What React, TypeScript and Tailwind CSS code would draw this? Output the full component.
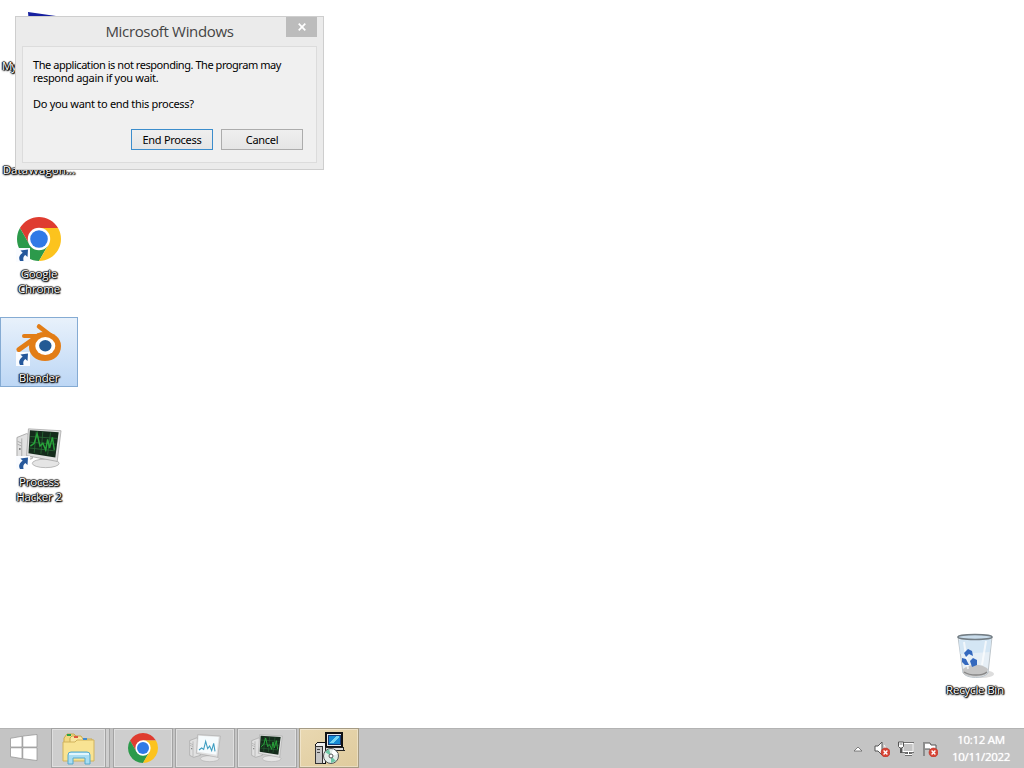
import type { ReactNode } from "react";
import clsx from "clsx";

const Chrome = ({ className }: { className?: string }) => (
  <svg viewBox="2 2 44 44" className={className}>
    <path d="M4.95 13A22 22 0 0 1 43.05 13H24L14.47 29.5Z" fill="#df3c30" />
    <path d="M4.95 13A22 22 0 0 0 24 46L33.53 29.5H14.47Z" fill="#2c9a4b" />
    <path d="M43.05 13A22 22 0 0 1 24 46L33.53 29.5L24 13Z" fill="#fcc31e" />
    <circle cx="24" cy="24" r="11.2" fill="#fff" />
    <circle cx="24" cy="24" r="8.8" fill="#3079e6" />
  </svg>
);

const Blender = ({ className }: { className?: string }) => (
  <svg viewBox="0 0 46 42" className={className}>
    <g stroke="#e27d16" strokeLinecap="round" strokeLinejoin="round" fill="none">
      <path d="M23 4.5L38 16" strokeWidth="4.5" />
      <path d="M8 14H29" strokeWidth="4" />
      <path d="M3 27.5L22 14" strokeWidth="5" />
    </g>
    <path d="M28 10C38 10 45 16 45 24C45 33 38 39 29 39C20 39 13 33 13 25C13 17 19 10 28 10Z" fill="#e27d16" />
    <ellipse cx="29.3" cy="24" rx="10" ry="9" fill="#fff" />
    <ellipse cx="29.3" cy="23.8" rx="6.2" ry="5.7" fill="#235a94" />
  </svg>
);

const Computer = ({ className, light }: { className?: string; light?: boolean }) => (
  <svg viewBox="0 0 48 44" className={className}>
    <path d="M1 11L11 7L17 9V33L7 36L1 33Z" fill="#e1e1e1" stroke="#999" strokeWidth=".8" />
    <path d="M6 12V35M1.5 15L6 17M1.5 18L6 20" stroke="#aaa" fill="none" />
    <circle cx="4" cy="23" r="1" fill="#777" />
    <path d="M25 31L34 33L33 38H25Z" fill="#bdbdbd" />
    <ellipse cx="31" cy="38" rx="14" ry="4.5" fill="#e5e5e5" stroke="#aaa" strokeWidth=".8" />
    <path d="M13 2L47 4L43 36L11 30Z" fill="#e1e1e1" stroke="#a5a5a5" strokeWidth=".8" />
    <path d="M14.5 3.5L44.5 5.5L41 32L13 27.5Z" fill={light ? "#f6fbfd" : "#142b1b"} />
    {light ? (
      <path d="M15 25L19 22L22 24L25 12L28 23L31 19L34 26L37 15L39 27" fill="none" stroke="#3b9cc0" strokeWidth="1.6" />
    ) : (
      <>
        <path d="M15 10L43 12M15 16L42 18M14 22L41 25M21 5L19 27M28 5L26 28M36 6L33 29" stroke="#2a6c37" strokeWidth=".8" />
        <path d="M15 20L19 17L22 7L25 20L28 17L31 24L33 13L35 22L38 11L40 24" fill="none" stroke="#28a53a" strokeWidth="1.5" />
      </>
    )}
  </svg>
);

const ShortcutArrow = () => (
  <svg viewBox="0 0 14 14" className="absolute bottom-1 left-0 size-3.5">
    <rect width="14" height="14" fill="#fafcff" />
    <path d="M4.5 2.5L12 1.5L11.5 9L9.3 7C7.3 8.5 7 10 7.5 13H4C2.2 9.5 3.5 7 6.7 4.7Z" fill="#24579b" />
  </svg>
);

const RecycleBin = () => (
  <svg viewBox="0 0 40 48" className="mt-[-2px] h-12 w-10">
    <ellipse cx="26" cy="42" rx="13" ry="4" fill="#ddd" />
    <path d="M3 5L8 41C12 47 29 47 33 41L37 5Z" fill="#e6eff6" stroke="#bdc5cb" />
    <path d="M4 8L36 7L35 20L5 22Z" fill="#cfe3f4" opacity=".8" />
    <path d="M8 37C16 31 27 32 33 37L32 41C28 46 12 46 8 41Z" fill="#c5c5c5" />
    <path d="M9 40C15 44 27 44 32 40" fill="none" stroke="#888" strokeWidth="1.5" />
    <path d="M9 10L13 37M31 9L27 33" stroke="#fff" strokeWidth="2" opacity=".7" />
    <ellipse cx="20" cy="5" rx="17" ry="2.5" fill="#c9dceb" stroke="#737d84" strokeWidth="1.6" />
    <g fill="#3469be">
      <path d="M9 21L13 17L17 19L18 24L14 22L11 25Z" />
      <path d="M7 26L11 27L14 33L10 33L7 30Z" />
      <path d="M15 29L18 26L22 28L22 33L17 35L16 32Z" />
    </g>
  </svg>
);

const Folder = () => (
  <svg viewBox="0 0 34 34" className="mt-0.5 h-[34px] w-[34px]">
    <path d="M2 6L5 2H12L14 4V25H2Z" fill="#f2d780" stroke="#c9aa50" />
    <path d="M8 6L10 4H19L21 7H30V12H8Z" fill="#f9e6a1" stroke="#c9aa50" />
    <path d="M1 10H13L15 8H32V29H1Z" fill="#f8e393" stroke="#d1b35c" />
    <path d="M5 3H9" stroke="#29a34a" strokeWidth="2" />
    <path d="M12 5H16" stroke="#db5741" strokeWidth="2" />
    <path d="M21 7H25" stroke="#418bd0" strokeWidth="2" />
    <path d="M6 32V23Q6 20 9 20H25Q28 20 28 23V32H23V26H11V32Z" fill="#a9ddf2" stroke="#55a9cd" />
    <path d="M7 22H27" stroke="#e1f6fd" strokeWidth="2" />
  </svg>
);

const Installer = () => (
  <svg viewBox="0 0 32 32" className="size-8" shapeRendering="crispEdges">
    <path d="M2 13L5 10H12V31H2Z" fill="#eee" stroke="#111" />
    <path d="M2 14H9V31H2Z" fill="#c5c5c5" stroke="#333" />
    <path d="M4 17H7M4 20H7" stroke="#444" />
    <path d="M13 1H29V15H13Z" fill="#e8e8e8" stroke="#111" strokeWidth="1.3" />
    <path d="M15 3H27V12H15Z" fill="#168bd4" stroke="#173c78" />
    <path d="M16 11L24 4H26V6L20 11Z" fill="#76d6f2" />
    <path d="M12 15H30L31 18H13Z" fill="#ddd" stroke="#222" />
    <g shapeRendering="auto">
      <circle cx="18" cy="24" r="7.5" fill="#e5eeea" stroke="#555" />
      <path d="M18 24L12 20L16 17ZM18 24L23 29L18 31Z" fill="#6ec6a5" />
      <path d="M18 24L20 17L25 22Z" fill="#fff" />
      <circle cx="18" cy="24" r="2" fill="#fff" stroke="#555" />
    </g>
  </svg>
);

const ErrorBadge = () => (
  <g>
    <circle cx="11.5" cy="11.5" r="4.5" fill="#d84435" stroke="#b93226" strokeWidth=".6" />
    <path d="M9.6 9.6L13.4 13.4M13.4 9.6L9.6 13.4" stroke="#fff" strokeWidth="1.4" />
  </g>
);

const labelStyle =
  "whitespace-nowrap text-center font-['Open_Sans',sans-serif] text-[11.5px] leading-[15px] tracking-[-0.2px] text-white [text-shadow:0_0_1px_#000,1px_1px_1px_#000,-1px_0_1px_#000,1px_0_1px_#000,0_1px_2px_#000,0_-1px_1px_#555]";

interface DesktopIconProps {
  className: string;
  label: ReactNode;
  labelClassName?: string;
  children?: ReactNode;
  shortcut?: boolean;
  selected?: boolean;
}

const DesktopIcon = ({ className, label, labelClassName, children, shortcut, selected }: DesktopIconProps) => (
  <div
    className={clsx(
      "absolute flex h-[70px] w-[78px] flex-col items-center border pt-1",
      selected ? "border-[#85abd3] bg-linear-to-b from-[#e8f1fb] to-[#bdd7f5]" : "border-transparent",
      className
    )}
  >
    <div className="relative flex h-12 w-[46px] shrink-0 items-start justify-center">
      {children}
      {shortcut && <ShortcutArrow />}
    </div>
    <div className={clsx(labelStyle, labelClassName)}>{label}</div>
  </div>
);

const TaskButton = ({ children, active, narrow }: { children: ReactNode; active?: boolean; narrow?: boolean }) => (
  <div
    className={clsx(
      "flex h-10 items-center justify-center border shadow-[inset_0_0_0_1px_rgba(255,255,255,0.35)]",
      narrow ? "w-[55px]" : "w-[60px]",
      active ? "border-[#a59b84] bg-linear-to-br from-[#e9d8b1] to-[#dfcb9d]" : "border-[#a3a3a3] bg-[#cecece]"
    )}
  >
    {children}
  </div>
);

const Dialog = () => (
  <div className="absolute left-[15px] top-4 h-[154px] w-[309px] border border-[#cecece] bg-[#ebebeb] px-1.5 font-['Noto_Sans',sans-serif]">
    <div className="relative flex h-[29px] items-center justify-center">
      <span className="whitespace-nowrap font-['Open_Sans',sans-serif] text-[15px] tracking-[-0.34px] text-[#444]">
        Microsoft Windows
      </span>
      <button aria-label="Close" className="absolute right-0 top-0 flex h-5 w-[31px] items-center justify-center bg-[#bcbcbc]">
        <svg viewBox="0 0 8 8" className="size-2">
          <path d="M0.7 0.7L7.3 7.3M7.3 0.7L0.7 7.3" stroke="#fff" strokeWidth="1.7" />
        </svg>
      </button>
    </div>
    <div className="h-[117px] border border-[#dcdcdc] bg-[#f0f0f0] px-2.5 pt-[11px] text-[11px] leading-[13px] tracking-[-0.3px] text-black">
      <p className="whitespace-nowrap">
        <span className="tracking-[-0.45px]">The application is not responding. The program may</span>
        <br />
        respond again if you wait.
      </p>
      <p className="mt-[13px]">Do you want to end this process?</p>
      <div className="mt-[19px] flex justify-end gap-2 pr-[3px]">
        <button className="h-[21px] w-[82px] border border-[#3c8dcc] bg-linear-to-b from-[#efefef] to-[#e5e5e5]">End Process</button>
        <button className="h-[21px] w-[82px] border border-[#acacac] bg-linear-to-b from-[#efefef] to-[#e5e5e5]">Cancel</button>
      </div>
    </div>
  </div>
);

const Taskbar = () => (
  <div className="flex h-10 items-stretch justify-between bg-[#c4c4c4] shadow-[inset_0_1px_0_#b3b3b3]">
    <div className="flex">
      <div className="flex w-[51px] items-center pl-2.5">
        <svg viewBox="0 0 28 27" className="mt-[-2px] h-[27px] w-7" fill="#fff" stroke="#8f8f8f" strokeWidth=".7">
          <path d="M.5 4.3L12 2.3V13H.5ZM12.8 2.1L27 .5V13H12.8ZM.5 13.8H12V24.6L.5 22.7ZM12.8 13.8H27V26.5L12.8 24.7Z" />
        </svg>
      </div>
      <TaskButton narrow><Folder /></TaskButton>
      <div className="mr-[3px] w-1 border border-l-0 border-[#a3a3a3] bg-[#cecece]" />
      <div className="flex gap-0.5">
        <TaskButton><Chrome className="size-[30px]" /></TaskButton>
        <TaskButton><Computer light className="h-[30px] w-8" /></TaskButton>
        <TaskButton><Computer className="h-[30px] w-8" /></TaskButton>
        <TaskButton active><Installer /></TaskButton>
      </div>
    </div>
    <div className="flex items-center pr-3">
      <svg viewBox="0 0 10 6" className="mr-[11px] mt-0.5 h-1.5 w-2.5">
        <path d="M1 5L5 1L9 5Z" fill="#fff" stroke="#666" strokeWidth=".8" />
      </svg>
      <div className="mt-0.5 flex gap-2">
        <svg viewBox="0 0 16 16" className="size-4">
          <path d="M1 5H4L8 1V14L4 10H1Z" fill="#fff" stroke="#555" />
          <path d="M10 4Q12 6 11 8" fill="none" stroke="#fff" />
          <ErrorBadge />
        </svg>
        <svg viewBox="0 0 16 16" className="size-4">
          <path d="M5 2.5H15.2V10.5H5Z" fill="#c4c4c4" stroke="#555" strokeWidth="2.6" />
          <path d="M5 2.5H15.2V10.5H5Z" fill="#c4c4c4" stroke="#fff" strokeWidth="1.1" />
          <path d="M7 13.5H14M10.5 11V13.5" fill="none" stroke="#555" strokeWidth="2.4" />
          <path d="M7 13.5H14M10.5 11V13.5" fill="none" stroke="#fff" />
          <path d="M.5 1H5.5V5.5L4 7H2L.5 5.5Z" fill="#fff" stroke="#555" />
          <path d="M3 7V12" stroke="#555" strokeWidth="2" />
          <path d="M2.2 2V4M3.8 2V4" stroke="#777" strokeWidth=".7" />
        </svg>
        <svg viewBox="0 0 16 16" className="size-4">
          <path d="M2 1V15M3 2H8L9 4H14V10H9L8 8H3" fill="#fff" stroke="#555" />
          <ErrorBadge />
        </svg>
      </div>
      <div className="ml-3 flex w-[62px] flex-col items-center whitespace-nowrap font-['Open_Sans',sans-serif] text-[11.5px] leading-[17px] tracking-[-0.3px] text-white [text-shadow:0_0_1px_#fff]">
        <span>10:12 AM</span>
        <span>10/11/2022</span>
      </div>
    </div>
  </div>
);

const App = () => (
  <div className="flex h-screen w-screen flex-col overflow-hidden bg-white">
    <main className="relative flex-1">
      <DesktopIcon className="left-0 top-[5px]" label="My" labelClassName="self-start pl-px tracking-[-1px]">
        <svg viewBox="0 0 46 48" className="h-12 w-[46px]">
          <path d="M12 2L40 6L38 28L14 26Z" fill="#1620a0" />
        </svg>
      </DesktopIcon>
      <DesktopIcon className="left-0 top-[109px]" label="DataWagon..." labelClassName="tracking-[0.1px]" />
      <DesktopIcon className="left-0 top-[213px]" shortcut label={<>Google<br />Chrome</>}>
        <Chrome className="mt-[-1px] size-11" />
      </DesktopIcon>
      <DesktopIcon className="left-0 top-[317px]" shortcut selected label="Blender">
        <Blender className="h-[42px] w-[46px]" />
      </DesktopIcon>
      <DesktopIcon className="left-0 top-[421px]" shortcut label={<>Process<br />Hacker 2</>}>
        <Computer className="h-[44px] w-[46px]" />
      </DesktopIcon>
      <DesktopIcon className="left-[936px] top-[629px]" label="Recycle Bin">
        <RecycleBin />
      </DesktopIcon>
      <Dialog />
    </main>
    <Taskbar />
  </div>
);

export default App;
